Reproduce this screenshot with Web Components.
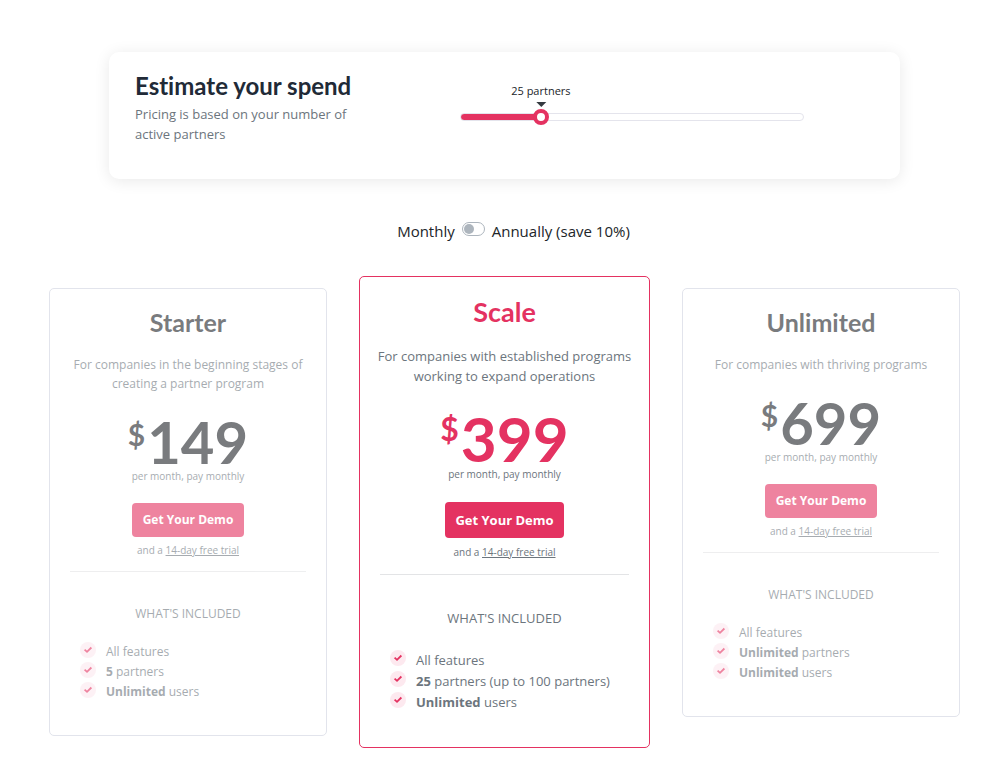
<!DOCTYPE html>
<html lang="en">
<head>
<meta charset="utf-8">
<meta name="viewport" content="width=device-width, initial-scale=1">
<title>Pricing</title>
<style>
  body { margin: 0; background: #fff; color: #212529; font-family: "Open Sans", "Noto Sans", sans-serif; font-variant-ligatures: none; --brand: #e43261; --display: Lato, "Open Sans", sans-serif; }
</style>
</head>
<body>
<pricing-page>
  <spend-estimator slot="estimate">
    <span slot="title">Estimate your spend</span>
    <span slot="text">Pricing is based on your number of active partners</span>
  </spend-estimator>
  <billing-switch slot="billing"></billing-switch>
  <plan-card price="149">
    <span slot="name">Starter</span>
    <span slot="about">For companies in the beginning stages of creating a partner program</span>
    <plan-feature>All features</plan-feature>
    <plan-feature><b>5</b> partners</plan-feature>
    <plan-feature><b>Unlimited</b> users</plan-feature>
  </plan-card>
  <plan-card price="399" featured>
    <span slot="name">Scale</span>
    <span slot="about">For companies with established programs working to expand operations</span>
    <plan-feature>All features</plan-feature>
    <plan-feature><b>25</b> partners (up to 100 partners)</plan-feature>
    <plan-feature><b>Unlimited</b> users</plan-feature>
  </plan-card>
  <plan-card price="699">
    <span slot="name">Unlimited</span>
    <span slot="about">For companies with thriving programs</span>
    <plan-feature>All features</plan-feature>
    <plan-feature><b>Unlimited</b> partners</plan-feature>
    <plan-feature><b>Unlimited</b> users</plan-feature>
  </plan-card>
</pricing-page>

<template id="page-template">
  <style>
    :host { display: block; padding: 52px 48px 32px 49px; }
    .top { padding: 0 60px; }
    .billing { display: flex; justify-content: center; padding-left: 18px; margin: 40px 0 33px; }
    .plans { display: grid; grid-template-columns: minmax(0, 278fr) minmax(0, 291fr) minmax(0, 278fr); gap: 32px; align-items: start; }
  </style>
  <main>
    <div class="top"><slot name="estimate"></slot></div>
    <div class="billing"><slot name="billing"></slot></div>
    <div class="plans"><slot></slot></div>
  </main>
</template>

<template id="estimator-template">
  <style>
    :host { display: grid; grid-template-columns: 240fr 344fr; column-gap: 85px; padding: 18px 96px 35px 26px; border-radius: 10px; background: #fff; box-shadow: 0 2px 16px rgba(0, 0, 0, .09); }
    h2 { margin: 0; font: 700 24px/32px var(--display); font-variant-ligatures: none; color: #212a37; white-space: nowrap; }
    p { margin: 2px 0 0; font-size: 13px; line-height: 20px; color: #6c757d; }
    .control { position: relative; padding-top: 38px; --thumb: 16px; }
    output { position: absolute; top: 12px; left: calc(var(--thumb) / 2 + (100% - var(--thumb)) * .2222); transform: translateX(-50%); display: flex; flex-direction: column; align-items: center; gap: 2px; font-size: 11px; line-height: 18px; white-space: nowrap; }
    output::after { content: ""; border: 5px solid transparent; border-top-color: #343a40; border-bottom: 0; }
    input { appearance: none; -webkit-appearance: none; display: block; width: 100%; height: 18px; margin: 0; background: none; cursor: pointer; }
    input::-webkit-slider-runnable-track { box-sizing: border-box; height: 8px; border: 1px solid #e4e4ec; border-radius: 4px; background: linear-gradient(to right, var(--brand) 23%, #fff 23%); }
    input::-webkit-slider-thumb { -webkit-appearance: none; box-sizing: border-box; width: 16px; height: 16px; margin-top: -5px; border: 4px solid var(--brand); border-radius: 50%; background: #fff; }
  </style>
  <div>
    <h2><slot name="title"></slot></h2>
    <p><slot name="text"></slot></p>
  </div>
  <div class="control">
    <output for="count">25 partners</output>
    <input id="count" type="range" min="0" max="9" value="2" aria-label="Number of active partners" aria-valuetext="25 partners">
  </div>
</template>

<template id="billing-template">
  <style>
    label { display: flex; align-items: center; gap: 7px; font-size: 15px; line-height: 24px; }
    input { appearance: none; -webkit-appearance: none; box-sizing: border-box; width: 23px; height: 14px; margin: 0 0 4px; padding: 1px; border: 1px solid #adb5bd; border-radius: 7px; background: #fff; }
    input::before { content: ""; display: block; width: 10px; height: 10px; border-radius: 50%; background: #adb5bd; }
    input:checked::before { margin-left: auto; }
  </style>
  <label><span>Monthly</span><input type="checkbox" role="switch"><span>Annually (save 10%)</span></label>
</template>

<template id="feature-template">
  <style>
    :host { display: flex; align-items: flex-start; gap: 10px; line-height: var(--item-line); }
    svg { flex: none; width: 16px; height: 16px; color: var(--brand); }
  </style>
  <svg viewBox="0 0 16 16" aria-hidden="true"><circle cx="8" cy="8" r="8" fill="#fde9ef"/><path d="M4.6 7.6 7 9.8 11.4 5.5" fill="none" stroke="currentColor" stroke-width="1.8"/></svg>
  <span><slot></slot></span>
</template>

<template id="card-template">
  <style>
    :host {
      display: block; box-sizing: border-box; margin-top: 12px; border: 1px solid #e2e4ec; border-radius: 5px; text-align: center;
      --pad: 18px 20px 33px; --text: 12px; --small: 10px; --line: 19px; --item-line: 20px;
      --title: 25px; --title-line: 30px; --digits: 58px; --price-line: 54px; --price-gap: 22px; --sign: 30px; --note-line: 15px; --tone: #212529;
      --button-width: 112px; --button-height: 34px; --button-gap: 19px; --rule-gap: 13px 0 32px; --list-gap: 19px;
    }
    :host([featured]) {
      margin-top: 0; border-color: var(--brand);
      --pad: 19px 20px 34px; --text: 13px; --small: 10px; --line: 20px; --item-line: 21px;
      --title: 27px; --title-line: 32px; --digits: 62px; --price-line: 56px; --price-gap: 24px; --sign: 32px; --note-line: 16px; --tone: var(--brand);
      --button-width: 119px; --button-height: 36px; --button-gap: 20px; --rule-gap: 14px 0 33px; --list-gap: 22px;
    }
    .body { padding: var(--pad); opacity: .6; color: #6c757d; font-size: var(--text); line-height: var(--line); }
    :host([featured]) .body { opacity: 1; }
    h3 { margin: 0 0 18px; font: 700 var(--title)/var(--title-line) var(--display); font-variant-ligatures: none; color: var(--tone); }
    p { margin: 0; }
    .about { margin: 0 -10px; }
    .price { display: flex; justify-content: center; align-items: flex-start; gap: 2px; margin-top: var(--price-gap); font: 700 var(--digits)/var(--price-line) var(--display); color: var(--tone); }
    .price sup { font-size: var(--sign); line-height: 38px; }
    .note { font-size: var(--small); line-height: var(--note-line); }
    button { width: var(--button-width); height: var(--button-height); margin: var(--button-gap) 0 6px; padding: 0; border: 0; border-radius: 4px; background: var(--brand); color: #fff; font-family: inherit; font-size: var(--text); font-weight: 700; line-height: 20px; vertical-align: top; cursor: pointer; white-space: nowrap; }
    a { color: inherit; text-decoration: underline; }
    hr { margin: var(--rule-gap); border: 0; border-top: 1px solid #e3e4e6; }
    .list { margin-top: var(--list-gap); padding-left: 10px; text-align: left; }
    ::slotted(plan-feature) { font-size: var(--text); }
  </style>
  <article class="body">
    <h3><slot name="name"></slot></h3>
    <p class="about"><slot name="about"></slot></p>
    <div class="price"><sup>$</sup><span class="amount"></span></div>
    <p class="note">per month, pay monthly</p>
    <button type="button">Get Your Demo</button>
    <p class="note">and a <a href="#trial">14-day free trial</a></p>
    <hr>
    <p>WHAT'S INCLUDED</p>
    <div class="list"><slot></slot></div>
  </article>
</template>

<script>
  class TemplateElement extends HTMLElement {
    constructor() {
      super();
      const template = document.getElementById(this.constructor.template);
      this.attachShadow({ mode: "open" }).append(template.content.cloneNode(true));
    }
  }
  customElements.define("pricing-page", class extends TemplateElement { static template = "page-template"; });
  customElements.define("spend-estimator", class extends TemplateElement { static template = "estimator-template"; });
  customElements.define("billing-switch", class extends TemplateElement { static template = "billing-template"; });
  customElements.define("plan-feature", class extends TemplateElement { static template = "feature-template"; });
  customElements.define("plan-card", class extends TemplateElement {
    static template = "card-template";
    connectedCallback() {
      this.shadowRoot.querySelector(".amount").textContent = this.getAttribute("price");
    }
  });
</script>
</body>
</html>
